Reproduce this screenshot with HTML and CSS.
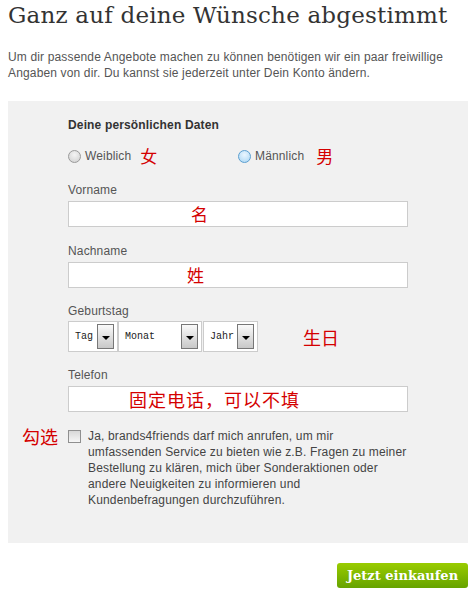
FILE: index.html
```html
<!DOCTYPE html>
<html lang="de">
<head>
    <meta charset="UTF-8">
    <meta name="viewport" content="width=device-width, initial-scale=1.0">
    <title>Ganz auf deine Wünsche abgestimmt</title>
    <link rel="stylesheet" href="styles.css">
</head>
<body>
    <div class="page">
        <h1>Ganz auf deine Wünsche abgestimmt</h1>
        <p class="intro">Um dir passende Angebote machen zu können benötigen wir ein paar freiwillige Angaben von dir. Du kannst sie jederzeit unter Dein Konto ändern.</p>

        <div class="panel">
            <div class="form">
                <h2>Deine persönlichen Daten</h2>

                <div class="gender">
                    <label class="option option-female">
                        <span class="radio"></span>Weiblich
                        <span class="note">女</span>
                    </label>
                    <label class="option">
                        <span class="radio radio-hover"></span>Männlich
                        <span class="note note-male">男</span>
                    </label>
                </div>

                <div class="field">
                    <div class="field-label">Vorname</div>
                    <div class="text-input"><span class="note note-first">名</span></div>
                </div>

                <div class="field">
                    <div class="field-label">Nachname</div>
                    <div class="text-input"><span class="note note-last">姓</span></div>
                </div>

                <div class="field field-birthday">
                    <div class="field-label">Geburtstag</div>
                    <div class="birthday">
                        <div class="select select-day"><span class="select-value">Tag</span><span class="select-arrow"></span></div>
                        <div class="select select-month"><span class="select-value">Monat</span><span class="select-arrow"></span></div>
                        <div class="select select-year"><span class="select-value">Jahr</span><span class="select-arrow"></span></div>
                        <span class="note note-birthday">生日</span>
                    </div>
                </div>

                <div class="field">
                    <div class="field-label">Telefon</div>
                    <div class="text-input"><span class="note note-phone">固定电话，可以不填</span></div>
                </div>

                <div class="consent">
                    <span class="note note-check">勾选</span>
                    <span class="checkbox"></span>
                    <p>Ja, brands4friends darf mich anrufen, um mir<br>
                    umfassenden Service zu bieten wie z.B. Fragen zu meiner<br>
                    Bestellung zu klären, mich über Sonderaktionen oder<br>
                    andere Neuigkeiten zu informieren und<br>
                    Kundenbefragungen durchzuführen.</p>
                </div>
            </div>
        </div>

        <div class="actions">
            <button class="submit">Jetzt einkaufen</button>
        </div>
    </div>
</body>
</html>
```

FILE: styles.css
```css
body {
    margin: 0;
    background-color: #ffffff;
    font-family: 'Liberation Sans', Arial, sans-serif;
    font-size: 12px;
    letter-spacing: 0.15px;
    color: #555555;
}
.page {
    width: 460px;
    margin: 0 4px 0 8px;
}
h1 {
    margin: 0;
    font-family: 'DejaVu Serif', serif;
    font-size: 23px;
    font-weight: normal;
    letter-spacing: 0.2px;
    line-height: 30px;
    color: #333333;
}
.intro {
    margin: 19px 0 20px;
    line-height: 16px;
}
.panel {
    background-color: #f1f1f1;
    padding: 16px 0 35px 60px;
}
.form {
    width: 340px;
}
h2 {
    margin: 0;
    font-size: 12px;
    line-height: 16px;
    color: #333333;
}
.note {
    font-family: 'Noto Sans CJK SC', sans-serif;
    font-size: 17px;
    line-height: 16px;
    letter-spacing: 0;
    color: #d40000;
}
.gender {
    display: flex;
    height: 16px;
    margin: 15px 0 18px;
}
.option {
    display: flex;
    align-items: center;
}
.option-female {
    width: 170px;
}
.option .note {
    margin-left: 9px;
}
.option .note-male {
    margin-left: 12px;
}
.radio {
    width: 11px;
    height: 11px;
    margin-right: 4px;
    border: 1px solid #9a9a9a;
    border-radius: 50%;
    background: radial-gradient(circle at 50% 35%, #f4f4f4, #cfcfcf);
}
.radio-hover {
    border-color: #5b9fd0;
    background: radial-gradient(circle at 50% 35%, #eaf6ff, #a9d6f4);
}
.field {
    margin-bottom: 16px;
}
.field-label {
    line-height: 16px;
    margin-bottom: 3px;
}
.field-birthday {
    margin-top: -1px;
    margin-bottom: 15px;
}
.field-birthday .field-label {
    margin-bottom: 2px;
}
.text-input {
    display: flex;
    align-items: center;
    height: 24px;
    border: 1px solid #cccccc;
    background-color: #ffffff;
}
.note-first {
    margin-left: 122px;
}
.note-last {
    margin-left: 118px;
}
.note-phone {
    margin-left: 60px;
    font-size: 18px;
    letter-spacing: 1px;
}
.birthday {
    display: flex;
    align-items: center;
}
.select {
    display: flex;
    box-sizing: border-box;
    height: 31px;
    padding: 2px 3px 2px 6px;
    border: 1px solid #cccccc;
    background-color: #ffffff;
}
.select-day {
    width: 50px;
}
.select-month {
    width: 84px;
}
.select-year {
    width: 55px;
    margin-left: 1px;
}
.select-value {
    flex: 1;
    display: flex;
    align-items: center;
    font-family: 'Liberation Mono', monospace;
    font-size: 10px;
    letter-spacing: 0;
    color: #222222;
}
.select-arrow {
    position: relative;
    width: 15px;
    border: 1px solid #777777;
    background: linear-gradient(#fafafa, #c8c8c8);
}
.select-arrow::after {
    content: '';
    position: absolute;
    left: 4px;
    top: 11px;
    border-left: 4px solid transparent;
    border-right: 4px solid transparent;
    border-top: 4px solid #000000;
}
.note-birthday {
    margin-left: 45px;
    font-size: 18px;
}
.consent {
    display: flex;
    align-items: flex-start;
    margin: 15px 0 0 -46px;
}
.note-check {
    flex: none;
    width: 36px;
    margin-right: 10px;
    font-size: 18px;
    white-space: nowrap;
}
.checkbox {
    flex: none;
    width: 11px;
    height: 11px;
    margin: 2px 7px 0 0;
    border: 1px solid #8f8f8f;
    background: linear-gradient(#d8d8d8, #f6f6f6);
}
.consent p {
    margin: 0;
    width: 330px;
    line-height: 16px;
    color: #444444;
}
.actions {
    display: flex;
    justify-content: flex-end;
    margin-top: 20px;
}
.submit {
    width: 131px;
    height: 25px;
    padding: 0;
    border: none;
    border-radius: 3px;
    background: linear-gradient(#99cc00, #66a300);
    font-family: 'DejaVu Serif', serif;
    font-size: 13px;
    font-weight: bold;
    letter-spacing: 0;
    color: #ffffff;
    cursor: pointer;
}
```
